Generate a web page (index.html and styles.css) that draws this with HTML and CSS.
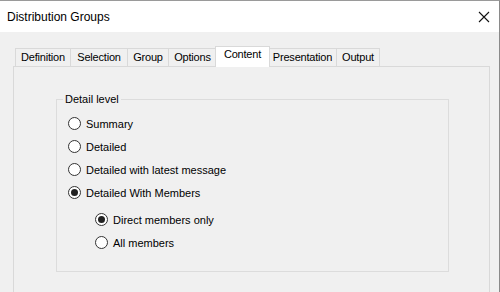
FILE: index.html
```html
<!DOCTYPE html>
<html>
<head>
<meta charset="utf-8">
<link rel="stylesheet" href="styles.css">
</head>
<body>
<div class="window">
  <div class="titlebar">
    <span class="title">Distribution Groups</span>
    <svg class="close" width="12" height="12" viewBox="0 0 12 12"><path d="M1 1 L11 11 M11 1 L1 11" stroke="#111" stroke-width="1.1" fill="none"/></svg>
  </div>
  <div class="client">
    <div class="tabs">
      <div class="tab w-def">Definition</div>
      <div class="tab w-sel">Selection</div>
      <div class="tab w-grp">Group</div>
      <div class="tab w-opt">Options</div>
      <div class="tab active w-con">Content</div>
      <div class="tab w-pre">Presentation</div>
      <div class="tab w-out">Output</div>
    </div>
    <div class="panel">
      <div class="group">
        <span class="legend">Detail level</span>
        <div class="options">
          <div class="radio"><span class="dot"></span><span>Summary</span></div>
          <div class="radio"><span class="dot"></span><span>Detailed</span></div>
          <div class="radio"><span class="dot"></span><span>Detailed with latest message</span></div>
          <div class="radio"><span class="dot checked"></span><span>Detailed With Members</span></div>
          <div class="sub">
            <div class="radio"><span class="dot checked"></span><span>Direct members only</span></div>
            <div class="radio"><span class="dot"></span><span>All members</span></div>
          </div>
        </div>
      </div>
    </div>
  </div>
</div>
</body>
</html>
```

FILE: styles.css
```css
html, body {
  margin: 0;
  padding: 0;
  background: #f0f0f0;
}
body {
  font-family: "Liberation Sans", Arial, sans-serif;
  font-size: 11px;
  color: #000;
  overflow: hidden;
}
.window {
  width: 500px;
  height: 292px;
  box-sizing: border-box;
  border-top: 1px solid #9a9a9a;
  border-right: 1px solid #8a8a8a;
  display: flex;
  flex-direction: column;
  overflow: hidden;
}
.titlebar {
  height: 31px;
  background: #fff;
  display: flex;
  align-items: center;
  justify-content: space-between;
  padding-left: 7px;
  padding-right: 9px;
  flex: none;
}
.title {
  font-size: 12px;
  line-height: 14px;
  padding-top: 1px;
}
.close {
  display: block;
  margin-top: 1px;
}
.client {
  flex: 1;
  background: #f0f0f0;
  padding: 14px 0 0 13px;
}
.tabs {
  display: flex;
  align-items: flex-end;
  padding-left: 2px;
  height: 20px;
  position: relative;
  z-index: 1;
}
.tab {
  box-sizing: border-box;
  height: 18px;
  border: 1px solid #d9d9d9;
  border-bottom: none;
  margin-right: -1px;
  text-align: center;
  line-height: 17px;
  background: #f0f0f0;
  letter-spacing: -0.2px;
}
.tab.active {
  height: 21px;
  background: #fff;
  margin-bottom: -1px;
  line-height: 15px;
  padding-bottom: 4px;
  position: relative;
  z-index: 2;
  margin-left: -1px;
  margin-right: -2px;
}
.w-def { width: 56px; }
.w-sel { width: 58px; }
.w-grp { width: 42px; }
.w-opt { width: 49px; }
.w-con { width: 55px; }
.w-pre { width: 69px; }
.w-out { width: 44px; }
.panel {
  width: 477px;
  height: 240px;
  box-sizing: border-box;
  border: 1px solid #d9d9d9;
  background: #f0f0f0;
  padding: 32px 0 0 42px;
}
.group {
  position: relative;
  width: 393px;
  height: 173px;
  box-sizing: border-box;
  border: 1px solid #dcdcdc;
}
.legend {
  position: absolute;
  left: 6px;
  top: -7px;
  padding: 0 2px;
  line-height: 13px;
  background: #f0f0f0;
}
.options {
  padding: 12px 0 0 11px;
}
.radio {
  display: flex;
  align-items: center;
  height: 23px;
  gap: 5px;
}
.dot {
  width: 13px;
  height: 13px;
  box-sizing: border-box;
  border: 1px solid #333;
  border-radius: 50%;
  background: #fff;
  display: flex;
  align-items: center;
  justify-content: center;
  flex: none;
}
.dot.checked::after {
  content: "";
  width: 7px;
  height: 7px;
  border-radius: 50%;
  background: #222;
}
.sub {
  margin-top: 4px;
  padding-left: 27px;
}
```
